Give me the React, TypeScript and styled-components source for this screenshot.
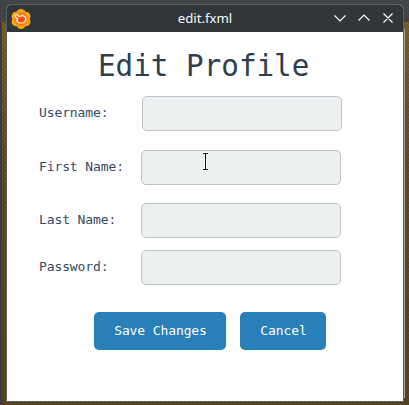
import React from "react";
import styled, { createGlobalStyle } from "styled-components";

const GlobalStyle = createGlobalStyle`
  *, *::before, *::after { box-sizing: border-box; }
  body { margin: 0; overflow: hidden; }
`;

const Desktop = styled.div`
  position: relative;
  width: 409px;
  height: 405px;
  padding: 4px 5px 3px 6px;
  background:
    repeating-conic-gradient(rgba(0, 0, 0, 0.1) 0 25%, transparent 0 50%) 0 0 / 4px 4px,
    linear-gradient(#46474a, #46474a) 0 0 / 100% 22px no-repeat,
    linear-gradient(#3c3f45, #3c3f45) 0 0 / 2px 100% no-repeat,
    linear-gradient(#80622b, #65491f 45%, #5c441e);
`;

const BackdropEdge = styled.div`
  position: absolute;
  left: 404px;
  top: 29px;
  width: 1px;
  height: 369px;
  background: #a4a5a6;
`;

const Window = styled.main`
  height: 398px;
  border: 1px solid #52606b;
  border-top-color: #5b6064;
  border-radius: 5px 5px 0 0;
  background: #fff;
  overflow: hidden;
  display: flex;
  flex-direction: column;
`;

const TitleBar = styled.header`
  height: 27px;
  flex: none;
  display: grid;
  grid-template-columns: 80px 1fr 81px;
  align-items: center;
  background: #31363b;
  color: #fcfcfc;
`;

const AppIcon = styled.svg`
  display: block;
  margin-left: 4px;
`;

const WindowTitle = styled.span`
  font: 13.2px/20px "Noto Sans", sans-serif;
  text-align: center;
  padding: 0 0 2px 1px;
`;

const Controls = styled.svg`
  display: block;
`;

const Content = styled.div`
  flex: 1;
  font-family: "DejaVu Sans Mono", monospace;
`;

const Heading = styled.h1`
  margin: 14px 0 0 91px;
  font-size: 29.25px;
  line-height: 40px;
  font-weight: 400;
  color: #2c3e50;
  white-space: pre;
`;

const Form = styled.form`
  display: flex;
  flex-direction: column;
  padding: 10px 0 0 32px;
`;

const Field = styled.label<{ $gap: number; $inset: number }>`
  display: grid;
  grid-template-columns: ${(p) => p.$inset}px 200px;
  align-items: center;
  height: 35px;
  margin-bottom: ${(p) => p.$gap}px;
`;

const LabelText = styled.span`
  font-size: 13px;
  line-height: 18px;
  letter-spacing: -0.11px;
  padding-bottom: 2px;
  color: #34495e;
  white-space: nowrap;
`;

const Input = styled.input`
  width: 200px;
  height: 35px;
  padding: 0 10px;
  border: 1px solid #bdc3c7;
  border-radius: 5px;
  background: #ecf0f1;
  outline: none;
`;

const Actions = styled.div`
  display: flex;
  gap: 14px;
  padding: 27px 0 0 55px;
`;

const Button = styled.button<{ $width: number }>`
  width: ${(p) => p.$width}px;
  height: 38px;
  padding: 0 0 0 1px;
  border: 0;
  border-radius: 5px;
  background: #2980b9;
  color: #fff;
  font: 13px/18px "DejaVu Sans Mono", monospace;
  letter-spacing: -0.11px;
`;

const TextCursor = styled.svg`
  position: absolute;
  left: 201px;
  top: 152px;
`;

const fields = [
  { label: "Username:", inset: 103, gap: 19 },
  { label: "First Name:", inset: 102, gap: 18 },
  { label: "Last Name:", inset: 102, gap: 12 },
  { label: "Password:", inset: 102, gap: 0 },
];

export default function App() {
  return (
    <Desktop>
      <GlobalStyle />
      <BackdropEdge />
      <Window>
        <TitleBar>
          <AppIcon width="20" height="20" viewBox="0 0 21 21">
            <g fill="#f7a80b">
              <circle cx="10.5" cy="4.8" r="4.8" />
              <circle cx="15.6" cy="7.7" r="4.8" />
              <circle cx="15.6" cy="13.3" r="4.8" />
              <circle cx="10.5" cy="16.2" r="4.8" />
              <circle cx="5.4" cy="13.3" r="4.8" />
              <circle cx="5.4" cy="7.7" r="4.8" />
            </g>
            <circle cx="10.5" cy="10.5" r="7.4" fill="#f57e1b" />
            <path d="M8 9 11 8l3.500 1.500-.5 3.500-4 1-2.500-2.500z" fill="#ef4a20" />
            <path
              d="M4.300 6.500 6.300 5.700 9 8.200l3-1.700 3.300 2.200.5 3-2.700 2.800-4.600.2-2.700-2.600 1.300-1.900-2.400-1.500z"
              fill="none"
              stroke="#fff1df"
              strokeWidth="1.15"
              strokeLinejoin="round"
            />
          </AppIcon>
          <WindowTitle>edit.fxml</WindowTitle>
          <Controls width="80" height="27" viewBox="0 0 80 27" fill="none" stroke="#fcfcfc" strokeWidth="1.2">
            <path d="M12.500 10.500 18 16l5.500-5.500M36.500 15.500 42 10l5.500 5.500M61.500 8.500l9 9M70.500 8.500l-9 9" />
          </Controls>
        </TitleBar>
        <Content>
          <Heading>Edit Profile</Heading>
          <Form onSubmit={(e) => e.preventDefault()}>
            {fields.map((f) => (
              <Field key={f.label} $gap={f.gap} $inset={f.inset}>
                <LabelText>{f.label}</LabelText>
                <Input type={f.label === "Password:" ? "password" : "text"} />
              </Field>
            ))}
            <Actions>
              <Button type="submit" $width={132}>Save Changes</Button>
              <Button type="button" $width={86}>Cancel</Button>
            </Actions>
          </Form>
        </Content>
      </Window>
      <TextCursor width="9" height="20" viewBox="0 0 9 20" fill="none">
        <path d="M2 1.500h5M4.500 1.500v16M2 17.500h5" stroke="#fff" strokeWidth="3" />
        <path d="M2 1.500h5M4.500 1.500v16M2 17.500h5" stroke="#111" strokeWidth="1" />
      </TextCursor>
    </Desktop>
  );
}
